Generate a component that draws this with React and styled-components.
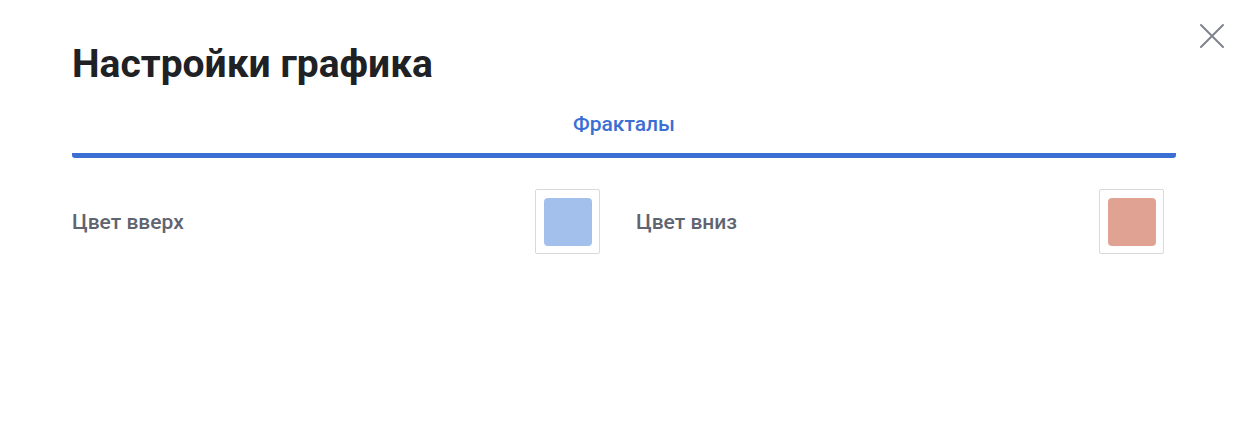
import styled, { createGlobalStyle } from "styled-components"

const GlobalStyle = createGlobalStyle`
    html, body {
        margin: 0;
        padding: 0;
        background: #ffffff;
        font-family: Roboto, "Noto Sans", sans-serif;
    }
`;

const rows = [
    { label: "Цвет вверх", color: "#a3c0ec" },
    { label: "Цвет вниз", color: "#e0a393" },
];

const App = () => {
    return (
        <>
            <GlobalStyle />
            <Modal>
                <CloseButton aria-label="Закрыть">
                    <svg width="26" height="26" viewBox="0 0 26 26" fill="none">
                        <path d="M2 2L24 24M24 2L2 24" stroke="#7f838c" strokeWidth="2" strokeLinecap="round" />
                    </svg>
                </CloseButton>
                <Title>Настройки графика</Title>
                <Tabs>
                    <Tab>Фракталы</Tab>
                </Tabs>
                <Settings>
                    {rows.map((row) => (
                        <Row key={row.label}>
                            <Label>{row.label}</Label>
                            <Swatch>
                                <SwatchColor $color={row.color} />
                            </Swatch>
                        </Row>
                    ))}
                </Settings>
            </Modal>
        </>
    )
};

const Modal = styled.div`
    position: relative;
    width: 1250px;
    height: 440px;
    box-sizing: border-box;
    padding: 38px 74px 0 72px;
    background: #ffffff;
`;

const CloseButton = styled.button`
    position: absolute;
    top: 23px;
    right: 25px;
    width: 26px;
    height: 26px;
    padding: 0;
    border: none;
    background: none;
    cursor: pointer;
    display: flex;
`;

const Title = styled.h1`
    margin: 0;
    font-size: 39px;
    line-height: 52px;
    font-weight: 700;
    color: #202124;
`;

const Tabs = styled.div`
    display: flex;
    justify-content: center;
    margin-top: 21px;
    border-bottom: 5px solid #3b6fd4;
    border-radius: 3px;
`;

const Tab = styled.div`
    padding-bottom: 16px;
    font-size: 21px;
    line-height: 26px;
    font-weight: 500;
    color: #3b6fd4;
`;

const Settings = styled.div`
    display: grid;
    grid-template-columns: 1fr 1fr;
    column-gap: 36px;
    padding-right: 12px;
    margin-top: 31px;
`;

const Row = styled.div`
    display: flex;
    align-items: center;
    justify-content: space-between;
`;

const Label = styled.span`
    font-size: 21px;
    font-weight: 500;
    color: #5f6470;
`;

const Swatch = styled.div`
    width: 65px;
    height: 65px;
    box-sizing: border-box;
    border: 1px solid #d9d9dc;
    border-radius: 2px;
    display: flex;
    align-items: center;
    justify-content: center;
`;

const SwatchColor = styled.div`
    width: 48px;
    height: 48px;
    border-radius: 4px;
    background: ${(p) => p.$color};
`;

export default App
